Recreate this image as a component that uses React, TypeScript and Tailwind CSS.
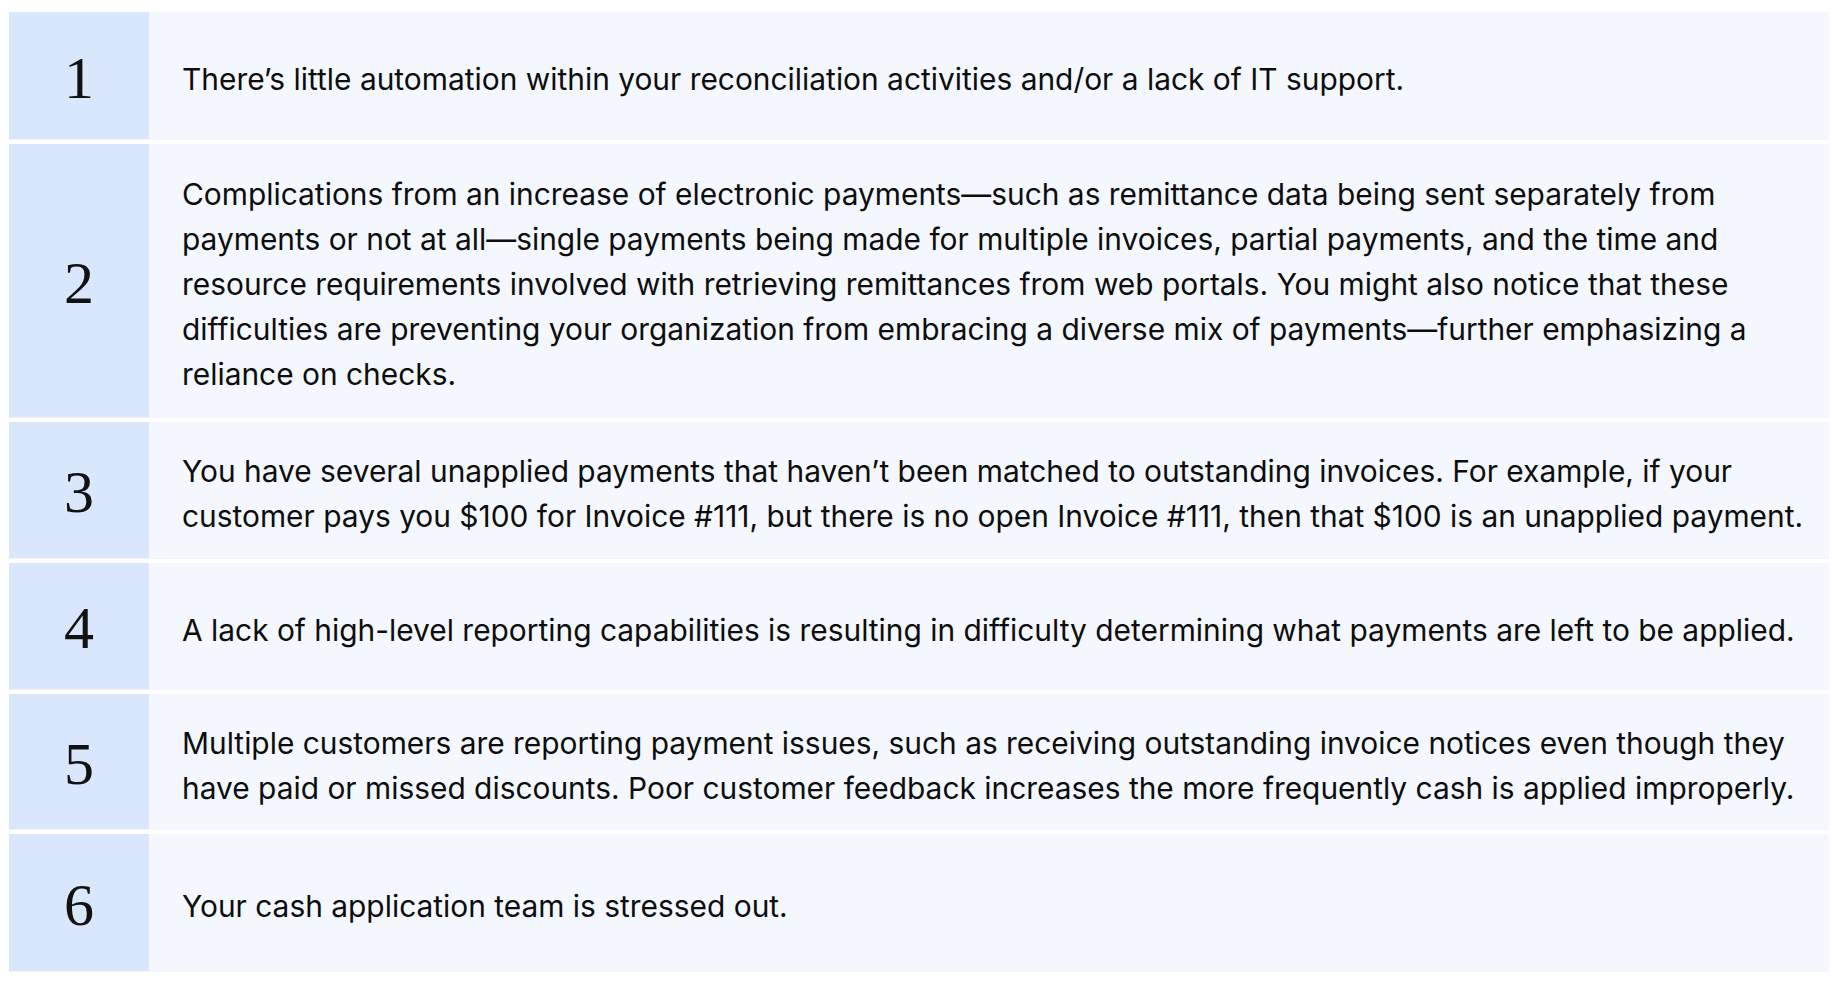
import React from "react";

type Row = { n: string; text: string; h: string };

const rows: Row[] = [
  {
    n: "1",
    h: "h-[128px]",
    text: "There’s little automation within your reconciliation activities and/or a lack of IT support.",
  },
  {
    n: "2",
    h: "h-[274px]",
    text: "Complications from an increase of electronic payments—such as remittance data being sent separately from payments or not at all—single payments being made for multiple invoices, partial payments, and the time and resource requirements involved with retrieving remittances from web portals. You might also notice that these difficulties are preventing your organization from embracing a diverse mix of payments—further emphasizing a reliance on checks.",
  },
  {
    n: "3",
    h: "h-[137px]",
    text: "You have several unapplied payments that haven’t been matched to outstanding invoices. For example, if your customer pays you $100 for Invoice #111, but there is no open Invoice #111, then that $100 is an unapplied payment.",
  },
  {
    n: "4",
    h: "h-[127px]",
    text: "A lack of high-level reporting capabilities is resulting in difficulty determining what payments are left to be applied.",
  },
  {
    n: "5",
    h: "h-[136px]",
    text: "Multiple customers are reporting payment issues, such as receiving outstanding invoice notices even though they have paid or missed discounts. Poor customer feedback increases the more frequently cash is applied improperly.",
  },
  {
    n: "6",
    h: "h-[138px]",
    text: "Your cash application team is stressed out.",
  },
];

export default function App() {
  return (
    <div className="min-h-screen w-full bg-white pt-[12px] pl-[9px] pr-[9px]">
      <div className="flex w-[1820px] flex-col gap-[4px]">
        {rows.map((r) => (
          <div
            key={r.n}
            className={`flex ${r.h} border-b border-dotted border-[#e6ecf5]`}
          >
            <div className="flex w-[140px] shrink-0 items-center justify-center bg-[#d9e7fd] pt-[4px]">
              <span
                className="text-[60px] leading-none text-[#111111]"
                style={{ fontFamily: '"Liberation Serif", "DejaVu Serif", serif' }}
              >
                {r.n}
              </span>
            </div>
            <div className="flex min-w-0 flex-1 items-center bg-[#f4f8fe] pl-[33px] pr-[4px] pt-[8px]">
              <p
                className="text-[29.9px] font-[425] leading-[45px] text-[#0d0d0d]"
                style={{ fontFamily: 'Inter, "Noto Sans", sans-serif' }}
              >
                {r.text}
              </p>
            </div>
          </div>
        ))}
      </div>
    </div>
  );
}
